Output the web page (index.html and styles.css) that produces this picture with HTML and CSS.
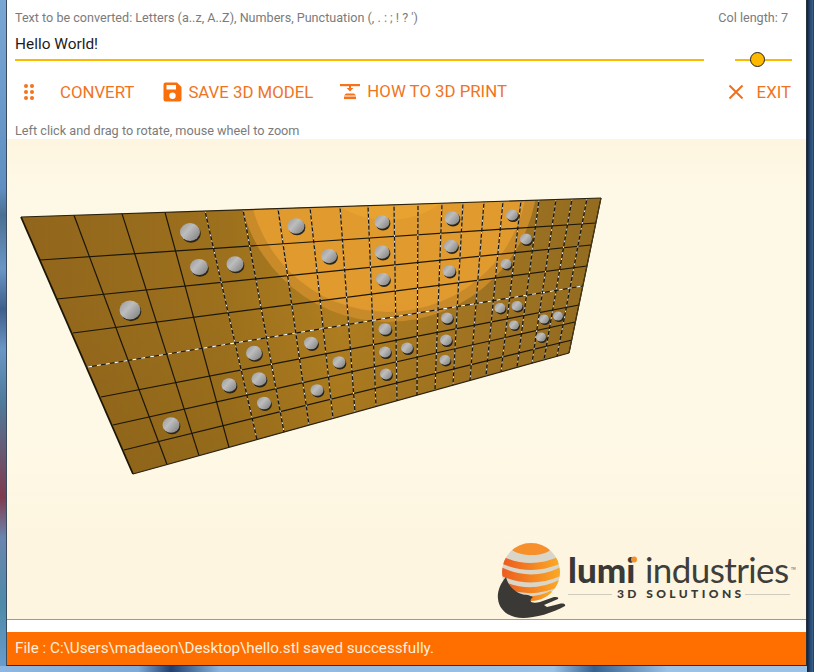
FILE: index.html
```html
<!DOCTYPE html>
<html lang="en">
<head>
<meta charset="utf-8">
<title>Braille text to 3D model</title>
<link rel="stylesheet" href="styles.css">
</head>
<body>
<main class="app">
  <section class="form">
    <div class="field field-text">
      <label class="label">Text to be converted: Letters (a..z, A..Z), Numbers, Punctuation (, . : ; ! ? ')</label>
      <div class="input">Hello World!</div>
    </div>
    <div class="field field-slider">
      <label class="label label-col">Col length: 7</label>
      <div class="slider"><span class="thumb"></span></div>
    </div>
  </section>

  <nav class="toolbar">
    <span class="handle">
      <svg width="10" height="16" viewBox="0 0 10 16"><g fill="#f4731c"><circle cx="2" cy="2" r="2"/><circle cx="8" cy="2" r="2"/><circle cx="2" cy="8" r="2"/><circle cx="8" cy="8" r="2"/><circle cx="2" cy="14" r="2"/><circle cx="8" cy="14" r="2"/></g></svg>
    </span>
    <a class="action action-convert">CONVERT</a>
    <a class="action action-save">
      <svg width="19" height="20" viewBox="0 0 19 20"><path fill="#f96f0c" fill-rule="evenodd" d="M2.5 0.5H14L18.5 5V17.5a2 2 0 0 1-2 2H2.5a2 2 0 0 1-2-2V2.5a2 2 0 0 1 2-2ZM3.5 3V7.5H13V3ZM9.5 10.5a3.2 3.2 0 1 0 0 6.4a3.2 3.2 0 0 0 0-6.4Z"/></svg>
      SAVE 3D MODEL
    </a>
    <a class="action action-howto">
      <svg width="20" height="17" viewBox="0 0 20 17"><g fill="#f4731c"><rect x="0" y="1" width="20" height="2.2"/><rect x="9" y="3" width="2" height="3"/><path d="M6.6 5H13.4L10 8.5Z"/><path d="M4 12.5H16L14 10.5H6Z"/><rect x="4" y="13.5" width="12" height="2.6"/></g></svg>
      HOW TO 3D PRINT
    </a>
    <a class="action action-exit">
      <svg class="exit-x" width="16" height="14" viewBox="0 0 16 14"><path stroke="#ef6f1b" stroke-width="2" d="M1.5 0.5L14.5 13.5M14.5 0.5L1.5 13.5"/></svg>
      EXIT
    </a>
  </nav>

  <p class="hint">Left click and drag to rotate, mouse wheel to zoom</p>

  <section class="viewport">
    <svg class="scene" id="scene" width="800" height="480" viewBox="7 139 800 480" xmlns="http://www.w3.org/2000/svg">
      <defs>
        <clipPath id="plate"><path d="M21 217L601 198L569 353L133 474Z"/></clipPath>
        <linearGradient id="base" x1="21" y1="0" x2="601" y2="0" gradientUnits="userSpaceOnUse">
          <stop offset="0" stop-color="#91661c"/>
          <stop offset="0.35" stop-color="#9c701c"/>
          <stop offset="0.55" stop-color="#b07e20"/>
          <stop offset="0.8" stop-color="#9f7322"/>
          <stop offset="1" stop-color="#936c20"/>
        </linearGradient>
        <linearGradient id="shade" x1="0" y1="300" x2="0" y2="470" gradientUnits="userSpaceOnUse">
          <stop offset="0" stop-color="#7a5210" stop-opacity="0"/>
          <stop offset="1" stop-color="#6a4810" stop-opacity="0.18"/>
        </linearGradient>
        <linearGradient id="dot" x1="0" y1="0" x2="1" y2="0.8">
          <stop offset="0" stop-color="#989898"/>
          <stop offset="0.45" stop-color="#bdbdbd"/>
          <stop offset="1" stop-color="#858585"/>
        </linearGradient>
      </defs>
      <g clip-path="url(#plate)">
        <rect x="0" y="180" width="620" height="310" fill="url(#base)"/>
        <ellipse cx="388" cy="172" rx="150" ry="150" fill="#c98b2a"/>
        <ellipse cx="388" cy="172" rx="140" ry="140" fill="#e09a2e"/>
        <ellipse cx="388" cy="168" rx="72" ry="52" fill="#e8a22f"/>
        <rect x="0" y="180" width="620" height="310" fill="url(#shade)"/>
      </g>
      <g id="grid"></g>
      <g id="dots"></g>
    </svg>
    <svg class="logo" width="300" height="77" viewBox="0 0 300 77" xmlns="http://www.w3.org/2000/svg">
      <defs>
        <clipPath id="globe"><circle cx="34" cy="30" r="29"/></clipPath>
        <linearGradient id="stripe" x1="0" y1="0" x2="1" y2="0">
          <stop offset="0" stop-color="#ec5a1e"/>
          <stop offset="1" stop-color="#fbab26"/>
        </linearGradient>
      </defs>
      <g clip-path="url(#globe)">
        <rect x="0" y="0" width="68" height="60" fill="#d9d6c9"/>
        <path d="M14 0H54V7C48 15 22 15 14 7Z" fill="#f7902a"/>
        <path d="M5 18Q34 31 63 18" fill="none" stroke="url(#stripe)" stroke-width="7"/>
        <path d="M3 29Q34 44 65 29" fill="none" stroke="url(#stripe)" stroke-width="8"/>
        <path d="M5 42Q34 55 63 41" fill="none" stroke="url(#stripe)" stroke-width="6"/>
        <path d="M12 52Q34 62 55 51" fill="none" stroke="url(#stripe)" stroke-width="5"/>
      </g>
      <path fill="#3a3936" d="M9 35C3 42 0 50 1 57C2 68 12 76 26 76C38 76 56 71 68 64C69 62 66 61 62 62L50 65L47 63L61 57C62 55 60 55 57 55L43 60C36 62 30 60 36 55L31 53C24 53 19 50 15 46C12 43 10 39 9 35Z"/>
      <text class="logo-bold" x="71" y="41">lumi</text>
      <text class="logo-light" x="148" y="41">industries</text>
      <circle cx="137" cy="17.5" r="3" fill="#f5902a"/>
      <text class="logo-tm" x="294" y="28">TM</text>
      <text class="logo-sub" x="120" y="56">3D SOLUTIONS</text>
      <path stroke="#cfccbe" stroke-width="1" d="M71 52.5H115M248 52.5H293"/>
    </svg>
  </section>

  <footer class="status">File : C:\Users\madaeon\Desktop\hello.stl saved successfully.</footer>
</main>
<script src="scene.js"></script>
</body>
</html>
```

FILE: styles.css
```css
* { box-sizing: border-box; }
html, body { height: 100%; }
body {
  margin: 0;
  padding: 0 7px 6px 6px;
  overflow: hidden;
  font-family: Roboto, "Liberation Sans", sans-serif;
  background:
    linear-gradient(90deg, #10203a 0, #24466f 3px, #3a5f8c 6px, #16233a 7px) right top / 7px 100% no-repeat,
    linear-gradient(90deg, #8db7e0 0, #7eaad8 17%, #1f3f6f 21%, #8cb6df 27%, #9cc2e6 68%, #35618f 73%, #9cc2e6 82%) left bottom / 100% 6px no-repeat,
    linear-gradient(180deg, #7aa6d4 0, #5f8fc2 28%, #4b6f93 32%, #6a96c6 40%, #3f5f8a 46%, #6a96c6 52%, #4f7a9a 60%, #7f3a4e 74%, #6a86ae 80%, #4f8aa8 90%, #6a9ed0 100%);
}
.app {
  height: 100%;
  display: flex;
  flex-direction: column;
  background: #fff;
  border-left: 1px solid #3b4a5c;
  border-right: 1px solid #26303c;
  border-bottom: 1px solid #26303c;
}

.form { display: flex; padding: 11px 14px 0 8px; height: 62px; }
.field { display: flex; flex-direction: column; }
.field-text { flex: 1; }
.field-slider { width: 57px; margin-left: 31px; align-items: flex-end; }
.label { font-size: 12.6px; line-height: 14px; color: #7b7b7b; white-space: nowrap; }
.label-col { margin-right: 4px; }
.input {
  margin-top: 9px;
  height: 27px;
  padding-top: 2px;
  font-size: 15.4px;
  line-height: 17px;
  color: #1c1c1c;
  border-bottom: 2px solid #fcb900;
}
.slider { position: relative; width: 57px; height: 2px; margin-top: 34px; background: #fcb900; }
.thumb {
  position: absolute;
  left: 15px;
  top: -7px;
  width: 15px;
  height: 15px;
  border-radius: 50%;
  background: #fcb900;
  border: 1px solid #222;
}

.toolbar { display: flex; align-items: center; height: 38px; padding: 2px 15px 0 17px; margin-top: 10px; color: #f0741e; }
.handle { display: flex; width: 36px; }
.action { display: flex; align-items: center; font-size: 16.8px; line-height: 20px; white-space: nowrap; }
.action svg { margin-right: 6px; }
.action-convert { margin-right: 29px; }
.action-save { margin-right: 27px; }
.action-howto { margin-top: -2px; }
.action-howto svg { margin-right: 7px; }
.action-exit { margin-left: auto; }
.action svg.exit-x { margin-right: 13px; }

.hint { margin: 0; padding: 14px 0 0 8px; height: 29px; font-size: 12.7px; line-height: 14px; color: #7b7b7b; }

.viewport {
  position: relative;
  height: 481px;
  background: linear-gradient(180deg, #fdf5df 0, #fef9e7 12%, #fef9e7 60%, #fdf5df 85%);
  border-bottom: 1px solid #9c9a94;
  flex: none;
}
.scene { display: block; }
.logo { position: absolute; left: 490px; top: 403px; }
.logo-bold { font: 900 35px Lato, sans-serif; fill: #3a3936; }
.logo-light { font: 400 35px Lato, sans-serif; fill: #3f3e3a; letter-spacing: -0.6px; }
.logo-tm { font: 400 3px Lato, sans-serif; fill: #3a3936; }
.logo-sub { font: 900 12px Lato, sans-serif; fill: #3a3936; letter-spacing: 3.4px; }

.status {
  margin-top: auto;
  height: 33px;
  padding-left: 8px;
  font-size: 15.2px;
  line-height: 33px;
  color: #fdeede;
  background: #ff6f00;
}
```

FILE: scene.js
```js
var NS = 'http://www.w3.org/2000/svg';
var topX = [21,74,122,165,205,243,278,310,340,368,394,418,442,463,484,503,521,539,556,572,587,601];
var botX = [133,167,199,229,257,284,309,333,355,376,397,417,435,453,470,486,501,517,532,544,557,569];
var left = [[21,217],[40,260],[57,299],[73,333],[88,367],[101,397],[113,425],[124,450],[133,474]];
var right = [[601,198],[596,223],[591,245],[587,266],[583,286],[579,305],[575,322],[572,340],[569,353]];
var dots = [
  [190,232,10],[296,226,8.5],[382,222,7.5],[452,218,7.5],[512,215,6],
  [199,267,9],[235,264,8.5],[329,256,8],[382,252,7.5],[451,246,7],[526,239,6],
  [130,310,10.5],[383,279,7],[449,271,6.5],[506,264,5.5],
  [254,353,8],[311,343,7],[385,329,6.5],[447,318,6],[500,308,5.5],[517,306,5.5],[544,319,5],[558,316,5],
  [229,385,7.5],[259,379,7.5],[339,362,6.5],[385,352,6],[407,348,6],[446,340,6],[514,325,5],[541,337,5],
  [264,403,7],[317,390,6.5],[386,374,6],[445,360,5.5],
  [171,425,8.5]
];
function el(parent, name, attrs) {
  var e = document.createElementNS(NS, name);
  for (var k in attrs) e.setAttribute(k, attrs[k]);
  parent.appendChild(e);
  return e;
}
function line(g, a, b, stroke, width, dash, opacity) {
  var attrs = { x1: a[0], y1: a[1], x2: b[0], y2: b[1], stroke: stroke, 'stroke-width': width };
  if (dash) attrs['stroke-dasharray'] = dash;
  if (opacity) attrs['stroke-opacity'] = opacity;
  el(g, 'line', attrs);
}
function topY(x) { return 217 + (198 - 217) * (x - 21) / 580; }
function bottomY(x) { return x < 133 ? 474 : 474 + (353 - 474) * (x - 133) / 436; }

var grid = document.getElementById('grid');
left.forEach(function (p, i) {
  if (i === 0 || i === 8) return;
  line(grid, p, right[i], '#1c1608', 1.2);
  if (i === 4) line(grid, p, right[i], '#fff', 1.1, '4 5');
});
topX.forEach(function (x, j) {
  var a = [x, topY(x)], b = [botX[j], bottomY(botX[j])];
  line(grid, a, b, '#1c1608', j === 0 ? 1.8 : 1.2);
  if (j >= 4 && j < 21) line(grid, a, b, '#fff', 1, '2 4', 0.9);
});
line(grid, left[0], right[0], '#2a2110', 1.2);
line(grid, left[8], right[8], '#2a2110', 1.2);
line(grid, right[0], right[8], '#4a3a18', 1);

var layer = document.getElementById('dots');
dots.forEach(function (d) {
  el(layer, 'ellipse', { cx: d[0] + 1, cy: d[1] + 1.5, rx: d[2] * 0.98, ry: d[2] * 0.92, fill: '#2a2418' });
  el(layer, 'ellipse', { cx: d[0], cy: d[1], rx: d[2], ry: d[2] * 0.9, fill: 'url(#dot)' });
});
```
